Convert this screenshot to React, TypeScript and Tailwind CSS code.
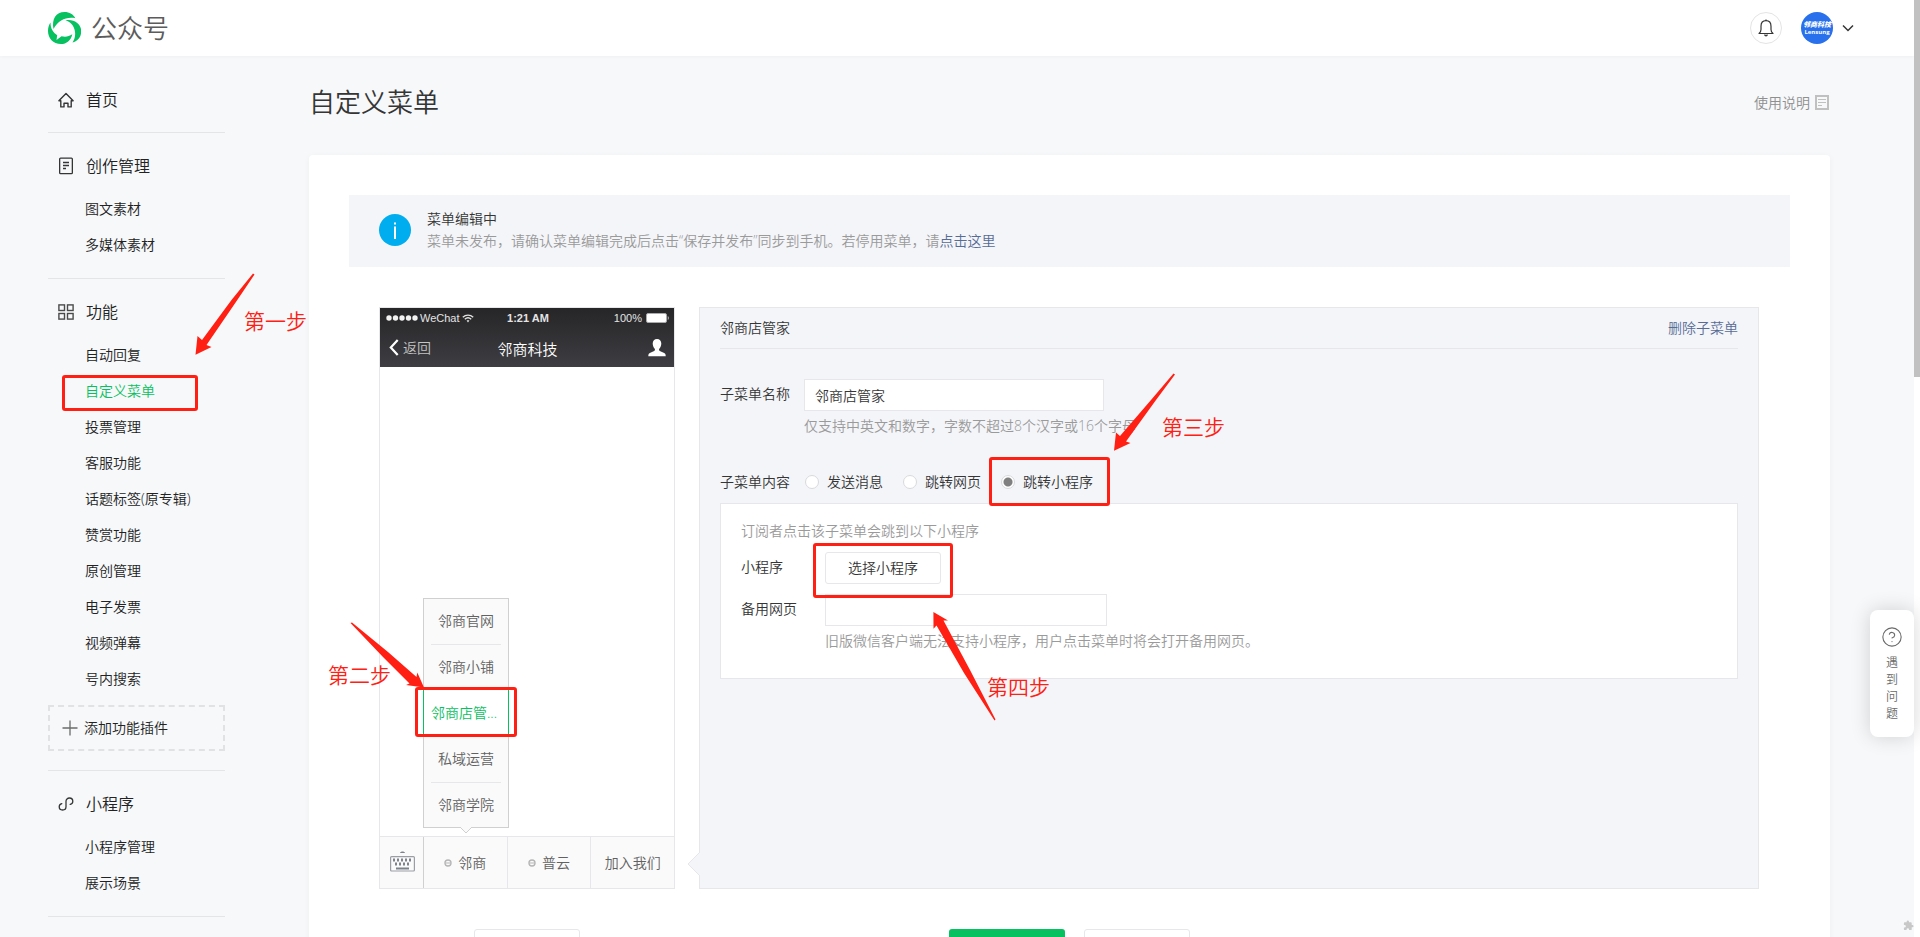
import type { ReactNode } from "react";
import { HelpCircle } from "lucide-react";

type Item = { label: string; active?: boolean };

const contentItems: Item[] = [{ label: "图文素材" }, { label: "多媒体素材" }];

const featureItems: Item[] = [
  { label: "自动回复" },
  { label: "自定义菜单", active: true },
  { label: "投票管理" },
  { label: "客服功能" },
  { label: "话题标签(原专辑)" },
  { label: "赞赏功能" },
  { label: "原创管理" },
  { label: "电子发票" },
  { label: "视频弹幕" },
  { label: "号内搜索" },
];

const programItems: Item[] = [{ label: "小程序管理" }, { label: "展示场景" }];

const subMenus: Item[] = [
  { label: "邻商官网" },
  { label: "邻商小铺" },
  { label: "邻商店管...", active: true },
  { label: "私域运营" },
  { label: "邻商学院" },
];

function Logo() {
  return (
    <svg viewBox="0 0 33 32" className="h-8 w-[33px]" fill="#07c160" aria-hidden="true">
      <path d="M5.500 17C3.500 7 8 0 16.500 0c5 0 9 2.500 10.800 6.200C18.500 4.500 10.500 8 5.500 17z" />
      <path d="M17.500 8.300C26.500 6.500 33.200 12.500 33.200 19c0 6-3.200 10-8.700 11.500C29 24.500 28.500 12 17.500 8.300z" />
      <path d="M2.500 10.500C2.500 16.500 5 20.500 9.200 23.200l-.7 4.800 5-3.800c4 1 7.500.3 10.800-2C23 28.500 18.500 32 13 32 5 32 0 26 0 19c0-3.500 1-6.500 2.500-8.500z" />
    </svg>
  );
}

function HomeIcon() {
  return (
    <svg viewBox="0 0 16 16" className="h-4 w-4" fill="none" stroke="#353535" strokeWidth="1.4" aria-hidden="true">
      <path d="M2.800 8.700H.9L8 1.400l7.100 7.300h-1.900v6.200H10v-3.700H6v3.700H2.800z" strokeLinejoin="round" />
    </svg>
  );
}

function DocIcon() {
  return (
    <svg viewBox="0 0 16 18" className="h-[18px] w-4" fill="none" stroke="#353535" strokeWidth="1.300" aria-hidden="true">
      <rect x="1.650" y="1.100" width="12.700" height="15.600" rx="1" />
      <path d="M5 5.500h6M5 8.500h6M5 11.500h3" />
    </svg>
  );
}

function GridIcon() {
  return (
    <svg viewBox="0 0 16 16" className="h-4 w-4" fill="none" stroke="#4a4a4a" strokeWidth="1.400" aria-hidden="true">
      <rect x=".9" y=".9" width="5.600" height="5.600" />
      <rect x="9.500" y=".9" width="5.600" height="5.600" />
      <rect x=".9" y="9.500" width="5.600" height="5.600" />
      <rect x="9.500" y="9.500" width="5.600" height="5.600" />
    </svg>
  );
}

function ProgramIcon() {
  return (
    <svg viewBox="0 0 16 16" className="h-4 w-4" fill="none" stroke="#353535" strokeWidth="1.300" strokeLinecap="round" aria-hidden="true">
      <path d="M3.800 7.600C2.200 8 1.200 9.200 1.200 10.800c0 1.900 1.500 3.200 3.400 3.200S8 12.600 8 10.800V5.200C8 3.400 9.500 2 11.400 2s3.400 1.300 3.400 3.200c0 1.600-1 2.800-2.600 3.200" />
    </svg>
  );
}

function NavList({ items }: { items: Item[] }) {
  return (
    <ul className="pb-[15px]">
      {items.map((it) => (
        <li key={it.label}>
          <a
            href="#"
            className={
              it.active
                ? "block h-9 pl-[37px] text-sm leading-9 text-[#07c160]"
                : "block h-9 pl-[37px] text-sm leading-9 text-[#222222]"
            }
          >
            {it.label}
          </a>
        </li>
      ))}
    </ul>
  );
}

function NavHead({ icon, label }: { icon: ReactNode; label: string }) {
  return (
    <a href="#" className="flex h-[50px] items-center gap-3 pl-[10px] text-base text-[#222222]">
      {icon}
      <span>{label}</span>
    </a>
  );
}

function Sidebar() {
  return (
    <nav className="ml-12 w-[177px] shrink-0 pt-[19px]">
      <div className="border-b border-[#e4e5e7] pb-[7px]">
        <NavHead icon={<HomeIcon />} label="首页" />
      </div>
      <div className="border-b border-[#e4e5e7] pt-2">
        <NavHead icon={<DocIcon />} label="创作管理" />
        <NavList items={contentItems} />
      </div>
      <div className="border-b border-[#e4e5e7] pt-2 pb-[19px]">
        <NavHead icon={<GridIcon />} label="功能" />
        <NavList items={featureItems} />
        <button
          type="button"
          className="-mt-[7px] flex h-[46px] w-full items-center gap-[6px] border-2 border-dashed border-[#e1e2e4] pl-3 text-sm text-[#222222]"
        >
          <svg viewBox="0 0 16 16" className="h-4 w-4" stroke="#6b6b6b" strokeWidth="1.300" aria-hidden="true">
            <path d="M8 .5v15M.5 8h15" />
          </svg>
          添加功能插件
        </button>
      </div>
      <div className="border-b border-[#e4e5e7] pt-2">
        <NavHead icon={<ProgramIcon />} label="小程序" />
        <NavList items={programItems} />
      </div>
    </nav>
  );
}

function Header() {
  return (
    <header className="flex h-14 shrink-0 items-center bg-white pr-[59px] pl-12 shadow-[0_1px_3px_rgba(0,0,0,0.03)]">
      <Logo />
      <span className="ml-[10px] text-[26px] leading-8 text-[#5c5c5c]">公众号</span>
      <div className="ml-auto flex items-center">
        <button type="button" aria-label="通知" className="flex h-8 w-8 items-center justify-center rounded-full border border-[#e4e4e4]">
          <svg viewBox="0 0 16 18" className="h-[18px] w-4" fill="none" stroke="#353535" strokeWidth="1.200" aria-hidden="true">
            <path d="M1 14.500h14c-1.300-1-2-2.200-2-4V7.300C13 4 11 1.700 8 1.700S3 4 3 7.300v3.200c0 1.800-.7 3-2 4z" strokeLinejoin="round" />
            <path d="M8 1.700V.6M6.600 15.500c.2.900.7 1.300 1.400 1.300s1.200-.4 1.400-1.300" />
          </svg>
        </button>
        <div className="ml-[19px] flex h-8 w-8 flex-col items-center justify-center overflow-hidden rounded-full bg-[#2870ec] text-white">
          <span className="text-[7px] leading-[8px] font-black whitespace-nowrap italic">邻商科技</span>
          <span className="text-[6px] leading-[6px] font-bold">Lensung</span>
        </div>
        <button type="button" aria-label="账号" className="ml-2 flex h-4 w-[14px] items-center justify-center">
          <svg viewBox="0 0 12 8" className="h-2 w-3" fill="none" stroke="#353535" strokeWidth="1.500" aria-hidden="true">
            <path d="M1 1.500l5 5 5-5" />
          </svg>
        </button>
      </div>
    </header>
  );
}

function PhoneHeader() {
  return (
    <div className="h-[59px] bg-linear-to-b from-[#262628] to-[#3e3d42] text-[#e4e4e4]">
      <div className="grid h-5 grid-cols-3 items-center pr-1 pl-[6px] font-['Liberation_Sans',sans-serif] text-[11px] leading-5">
        <div className="flex items-center gap-[2px]">
          <svg viewBox="0 0 32 6" className="h-[6px] w-8" fill="#f2f2f2" aria-hidden="true">
            <circle cx="3" cy="3" r="2.700" />
            <circle cx="9.500" cy="3" r="2.700" />
            <circle cx="16" cy="3" r="2.700" />
            <circle cx="22.500" cy="3" r="2.700" />
            <circle cx="29" cy="3" r="2.700" />
          </svg>
          <span>WeChat</span>
          <svg viewBox="0 0 12 9" className="h-[9px] w-3" fill="none" stroke="#e4e4e4" strokeWidth="1.400" aria-hidden="true">
            <path d="M.8 3.200c3-2.800 7.400-2.800 10.400 0M2.800 5.200c1.900-1.700 4.500-1.700 6.400 0" />
            <path d="M4.600 6.600L6 8.500l1.400-1.900c-.8-.6-2-.6-2.800 0z" fill="#e4e4e4" stroke="none" />
          </svg>
        </div>
        <span className="text-center font-bold">1:21 AM</span>
        <div className="flex items-center justify-end gap-1">
          <span>100%</span>
          <svg viewBox="0 0 24 10" className="h-[10px] w-6" aria-hidden="true">
            <rect x=".5" y=".5" width="20" height="9" rx="1.500" fill="#fff" stroke="#aaa" />
            <path d="M21.800 3v4c1.200-.5 1.200-3.500 0-4z" fill="#ddd" />
          </svg>
        </div>
      </div>
      <div className="grid h-[39px] grid-cols-3 items-center pr-2 pl-[9px]">
        <div className="flex items-center gap-1 text-sm text-[#c4c4c4]">
          <svg viewBox="0 0 10 17" className="h-[17px] w-[10px]" fill="none" stroke="#fff" strokeWidth="2.200" aria-hidden="true">
            <path d="M8.700 1L1.800 8.500 8.700 16" />
          </svg>
          返回
        </div>
        <span className="pt-1 text-center text-[15px] text-white">邻商科技</span>
        <svg viewBox="0 0 18 18" className="ml-auto h-[18px] w-[18px]" fill="#fff" aria-hidden="true">
          <path d="M9 0c2.600 0 4.300 2 4.300 4.600 0 2.200-.9 4-2 5.200-.5.700-.3 1.700.5 2.100l4.400 2c1 .5 1.500 1.300 1.500 3.300H.3c0-2 .5-2.800 1.500-3.300l4.400-2c.8-.4 1-1.400.5-2.100-1.100-1.200-2-3-2-5.200C4.700 2 6.400 0 9 0z" />
        </svg>
      </div>
    </div>
  );
}

function MenuDot() {
  return (
    <svg viewBox="0 0 8 8" className="h-2 w-2" fill="none" stroke="#b5b5b5" aria-hidden="true">
      <circle cx="4" cy="4" r="3" strokeWidth="1.400" />
      <path d="M2 4h4" strokeWidth="1" />
    </svg>
  );
}

function Phone() {
  return (
    <section className="flex h-[582px] w-[296px] shrink-0 flex-col border border-[#e7e7eb] bg-white">
      <PhoneHeader />
      <div className="flex-1" />
      <div className="relative flex h-[52px] border-t border-[#e7e7eb] bg-[#fafafa] text-sm text-[#616161]">
        <button type="button" aria-label="键盘" className="flex w-[43px] items-center justify-center pl-[2px]">
          <svg viewBox="0 0 25 22" className="mb-1 h-[22px] w-[25px]" fill="#7d828b" aria-hidden="true">
            <path d="M10 3c.5-2 4.500-2 5 0z" />
            <rect x=".6" y="6.600" width="23.800" height="14.400" rx="1" fill="none" stroke="#9a9da3" strokeWidth="1.200" />
            <path d="M3 8.500h2v3H3zM7 8.500h2v3H7zM11 8.500h2v3h-2zM15 8.500h2v3h-2zM19 8.500h2v3h-2zM5 12.500h2v3H5zM9 12.500h2v3H9zM13 12.500h2v3h-2zM17 12.500h2v3h-2zM6 17.500h13v2H6z" />
          </svg>
        </button>
        <button type="button" className="flex flex-1 items-center justify-center gap-[6px] border-l border-[#d0d0d0]">
          <MenuDot />
          邻商
        </button>
        <button type="button" className="flex flex-1 items-center justify-center gap-[6px] border-l border-[#e7e7eb]">
          <MenuDot />
          普云
        </button>
        <button type="button" className="flex flex-1 items-center justify-center border-l border-[#e7e7eb]">
          加入我们
        </button>
        <div className="absolute bottom-[60px] left-[43px] w-[86px] border border-[#d0d0d0] bg-[#fafafa]">
          {subMenus.map((m, i) =>
            m.active ? (
              <button
                key={m.label}
                type="button"
                className="relative -mx-px -mt-[2px] block h-12 w-[86px] border border-[#07c160] bg-white px-[7px] text-left whitespace-nowrap text-[#07c160]"
              >
                {m.label}
              </button>
            ) : (
              <button key={m.label} type="button" className="block w-full px-[7px]">
                <span
                  className={
                    i === 0 || i === 3
                      ? "block h-[46px] border-b border-[#e7e7eb] leading-11"
                      : i === 4
                        ? "block h-11 leading-11"
                        : "block h-[46px] leading-11"
                  }
                >
                  {m.label}
                </span>
              </button>
            ),
          )}
          <svg viewBox="0 0 12 7" className="absolute top-full left-9 h-[7px] w-3" aria-hidden="true">
            <path d="M0 0l6 6 6-6" fill="#fafafa" stroke="#d0d0d0" />
          </svg>
        </div>
      </div>
    </section>
  );
}

function Radio({ label, checked }: { label: string; checked?: boolean }) {
  return (
    <label className="flex items-center gap-2 text-sm text-[#353535]">
      <input
        type="radio"
        name="menu-content"
        defaultChecked={checked}
        className="h-[14px] w-[14px] appearance-none rounded-full border border-[#d9dadc] bg-white bg-[radial-gradient(circle,#808080_0_4px,transparent_5px)] bg-origin-border not-checked:bg-none"
      />
      {label}
    </label>
  );
}

function Editor() {
  return (
    <section className="relative min-w-0 flex-1 border border-[#e7e7eb] bg-[#f4f5f9] px-5 text-sm text-[#353535]">
      <svg viewBox="0 0 13 26" className="absolute bottom-[11px] -left-[13px] h-[26px] w-[13px]" aria-hidden="true">
        <path d="M13 1L1 13l12 12z" fill="#f4f5f9" />
        <path d="M13 1L1 13l12 12" fill="none" stroke="#e7e7eb" />
      </svg>
      <div className="flex h-[41px] items-center justify-between border-b border-[#e7e7eb]">
        <h2>邻商店管家</h2>
        <a href="#" className="text-[#576b95]">
          删除子菜单
        </a>
      </div>
      <div className="mt-[30px] flex">
        <label htmlFor="menu-name" className="w-21 leading-[30px]">
          子菜单名称
        </label>
        <div>
          <input
            id="menu-name"
            defaultValue="邻商店管家"
            className="block h-8 w-[300px] border border-[#e7e7eb] bg-white px-[10px] text-sm outline-none"
          />
          <p className="mt-1 leading-[22px] text-[#9a9a9a]">仅支持中英文和数字，字数不超过8个汉字或16个字母</p>
        </div>
      </div>
      <fieldset className="mt-[34px] flex h-[22px] items-center">
        <legend className="float-left w-[85px] leading-[22px]">子菜单内容</legend>
        <div className="flex gap-5">
          <Radio label="发送消息" />
          <Radio label="跳转网页" />
          <Radio label="跳转小程序" checked />
        </div>
      </fieldset>
      <div className="mt-[10px] h-44 border border-[#e7e7eb] bg-white px-5 pt-4">
        <p className="leading-[22px] text-[#9a9a9a]">订阅者点击该子菜单会跳到以下小程序</p>
        <div className="mt-[10px] flex">
          <span className="w-21 leading-[30px]">小程序</span>
          <button type="button" className="h-8 w-[116px] rounded-[3px] border border-[#e7e7eb] bg-white">
            选择小程序
          </button>
        </div>
        <div className="mt-[10px] flex">
          <label htmlFor="backup-url" className="w-21 leading-[30px]">
            备用网页
          </label>
          <div>
            <input id="backup-url" className="block h-8 w-[282px] border border-[#e7e7eb] bg-white px-[10px] outline-none" />
            <p className="mt-1 leading-[22px] text-[#9a9a9a]">
              旧版微信客户端无法支持小程序，用户点击菜单时将会打开备用网页。
            </p>
          </div>
        </div>
      </div>
    </section>
  );
}

function Annotations() {
  return (
    <div className="pointer-events-none absolute inset-0 overflow-hidden text-[21px] leading-6 text-[#ff2013]">
      <div className="absolute top-[375px] left-[62px] h-9 w-[136px] rounded-[3px] border-3 border-[#ff2013]" />
      <div className="absolute top-[687px] left-[415px] h-[50px] w-[102px] rounded-[3px] border-3 border-[#ff2013]" />
      <div className="absolute top-[457px] left-[989px] h-[49px] w-[121px] rounded-[3px] border-3 border-[#ff2013]" />
      <div className="absolute top-[543px] left-[813px] h-[55px] w-[140px] rounded-[3px] border-3 border-[#ff2013]" />
      <svg viewBox="0 0 1200 800" className="absolute top-0 left-0 h-[800px] w-[1200px]" fill="#ff2013" aria-hidden="true">
        <path d="M253 273.500L231.500 300 202 340 197.500 336 195.500 354.700 211.500 347 206.500 345 237.300 300 254.500 274.500z" />
        <path d="M350.500 623L383 657 409.500 683.500 406 685 424 687.500 417.300 672.500 416.500 677 388 652 352 622.500z" />
        <path d="M1173.500 373.500L1151 400 1120 436 1116 432.500 1114 450.700 1130.500 443 1126 441.500 1156 400 1175 374.500z" />
        <path d="M994.500 720.500L964 673 936.500 625.500 933.500 628.700 933.400 612 948 620.500 943.500 620.500 970 670 995.500 719.500z" />
      </svg>
      <span className="absolute top-[309px] left-[244px]">第一步</span>
      <span className="absolute top-[663px] left-[328px]">第二步</span>
      <span className="absolute top-[415px] left-[1162px]">第三步</span>
      <span className="absolute top-[675px] left-[987px]">第四步</span>
    </div>
  );
}

export default function App() {
  return (
    <div className="relative flex h-screen overflow-hidden bg-[#f6f8fa] font-['Open_Sans','Noto_Sans_CJK_SC',sans-serif] font-[350]">
      <div className="flex min-w-0 flex-1 flex-col">
        <Header />
        <div className="flex min-h-0 flex-1">
          <Sidebar />
          <main className="ml-21 flex min-w-0 flex-1 flex-col pr-21">
            <div className="flex h-[99px] shrink-0 items-center justify-between pr-px pb-[6px]">
              <h1 className="text-[26px] text-[#353535]">自定义菜单</h1>
              <a href="#" className="flex items-center gap-[5px] text-sm text-[#8f8f8f]">
                使用说明
                <svg viewBox="0 0 14 15" className="h-[15px] w-[14px]" fill="none" stroke="#c0c0c0" aria-hidden="true">
                  <rect x="1" y="1" width="12" height="13" strokeWidth="2" />
                  <path d="M3 4.500h8M3 7.500h8M3 10.500h4" />
                </svg>
              </a>
            </div>
            <div className="shrink-0 rounded-t bg-white px-10 pt-10 shadow-[0_1px_6px_rgba(0,0,0,0.04)]">
              <div className="flex h-[72px] items-center gap-4 bg-[#f4f5f9] px-[30px] pb-[2px]">
                <svg viewBox="0 0 32 32" className="h-8 w-8" aria-hidden="true">
                  <circle cx="16" cy="16" r="16" fill="#00aeef" />
                  <path d="M15 8.500h2v2h-2zM15 12.500h2V25h-2z" fill="#fff" />
                </svg>
                <div className="text-sm leading-[22px]">
                  <p className="text-[#353535]">菜单编辑中</p>
                  <p className="text-[#9a9a9a]">
                    菜单未发布，请确认菜单编辑完成后点击“保存并发布”同步到手机。若停用菜单，请
                    <a href="#" className="text-[#576b95]">
                      点击这里
                    </a>
                  </p>
                </div>
              </div>
              <div className="mt-10 flex gap-6 pr-[31px] pl-[30px]">
                <Phone />
                <Editor />
              </div>
              <div className="mt-10 flex px-[125px] text-sm">
                <button type="button" className="h-10 w-[106px] rounded-[3px] border border-[#e7e7eb] bg-white text-[#353535]">
                  菜单排序
                </button>
                <button type="button" className="ml-[369px] h-10 w-[116px] rounded-[3px] bg-[#07c160] text-white">
                  保存并发布
                </button>
                <button type="button" className="ml-[19px] h-10 w-[106px] rounded-[3px] border border-[#e7e7eb] bg-white text-[#353535]">
                  预览
                </button>
              </div>
            </div>
          </main>
        </div>
      </div>
      <div className="w-[6px] shrink-0 bg-white">
        <div className="h-[377px] bg-[#c1c1c1]" />
      </div>
      <Annotations />
      <button
        type="button"
        className="absolute top-[610px] right-[6px] flex h-[127px] w-11 flex-col items-center rounded-lg bg-white pt-4 text-xs text-[#6a6a6a] shadow-[0_0_20px_rgba(0,0,0,0.16)]"
      >
        <HelpCircle size={22} strokeWidth={1.200} />
        <span className="mt-[6px] w-3 leading-[17px]">遇到问题</span>
      </button>
      <svg viewBox="0 0 24 24" className="absolute right-[6px] bottom-[6px] h-[11px] w-[11px]" fill="#c8c8c8" aria-hidden="true">
        <path d="M20.500 11H19V7a2 2 0 00-2-2h-4V3.500a2.500 2.500 0 00-5 0V5H4a2 2 0 00-2 2v3.800h1.500a2.700 2.700 0 010 5.400H2V20a2 2 0 002 2h3.800v-1.500a2.700 2.700 0 015.400 0V22H17a2 2 0 002-2v-4h1.500a2.500 2.500 0 000-5z" />
      </svg>
    </div>
  );
}
